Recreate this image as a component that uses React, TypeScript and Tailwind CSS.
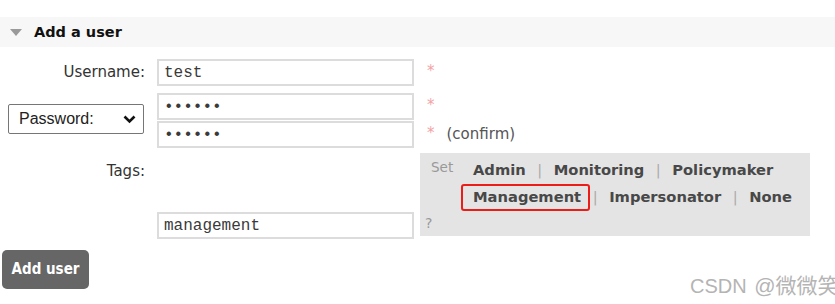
import React from "react";

const inputCls =
  "w-[257px] h-[27px] border-2 border-[#dcdcdc] bg-white px-[5px] text-[16px] text-[#3a3a3a] font-['Liberation_Mono',monospace] outline-none";

function Star() {
  return (
    <span className="self-start mt-[3px] ml-[13px] text-[15px] leading-[18px] text-[#f4a3a3]">*</span>
  );
}

function Sep() {
  return <span className="w-[28px] text-center font-normal text-[#aaa]">|</span>;
}

export default function App() {
  return (
    <div className="relative w-[835px] h-[304px] overflow-hidden bg-white font-['DejaVu_Sans',sans-serif] pt-[17px]">
      {/* Header */}
      <div className="h-[30px] bg-[#f7f7f7] flex items-center pl-[10px]">
        <svg width="12" height="7" viewBox="0 0 12 7" className="mt-[1px]">
          <polygon points="0,0 12,0 6,7" fill="#9a9a9a" />
        </svg>
        <h2 className="ml-[12px] mt-[1px] text-[14.5px] font-bold text-[#111]">Add a user</h2>
      </div>

      {/* Username */}
      <div className="mt-[12px] flex items-center">
        <label className="w-[145px] text-right text-[15px] text-[#333]">Username:</label>
        <input className={"ml-[12px] " + inputCls} defaultValue="test" readOnly />
        <Star />
      </div>

      {/* Password */}
      <div className="mt-[7px] flex items-center">
        <div className="w-[145px] pl-[8px] -mt-[3px]">
          <div className="w-[136px] h-[30px] border border-[#767676] rounded-[2px] bg-white flex items-center justify-between pl-[10px] pr-[7px] font-['Liberation_Sans',sans-serif] text-[16px] text-[#222]">
            <span>Password:</span>
            <svg width="13" height="9" viewBox="0 0 13 9">
              <polyline points="1.5,1.5 6.5,6.5 11.5,1.5" fill="none" stroke="#111" strokeWidth="2.6" />
            </svg>
          </div>
        </div>
        <div className="ml-[12px] flex flex-col gap-[1px]">
          <div className="flex items-center">
            <input type="password" className={inputCls} defaultValue="secret" readOnly />
            <Star />
          </div>
          <div className="flex items-center">
            <input type="password" className={inputCls} defaultValue="secret" readOnly />
            <Star />
            <span className="ml-[12px] text-[15px] text-[#555]">(confirm)</span>
          </div>
        </div>
      </div>

      {/* Tags */}
      <div className="mt-[5px] flex items-start">
        <label className="w-[145px] mt-[9px] text-right text-[15px] leading-[18px] text-[#333]">Tags:</label>
        <div className="ml-[12px] h-[86px] flex flex-col justify-end">
          <input className={inputCls} defaultValue="management" readOnly />
        </div>
        <div className="ml-[6px] w-[390px] h-[83px] bg-[#e4e4e4] pl-[5px] pt-[3px]">
          <div className="flex">
            <span className="w-[48px] pl-[6px] -mt-[2px] text-[13.5px] leading-[27px] text-[#999]">Set</span>
            <div className="flex flex-col text-[14.7px] leading-[27px] font-bold text-[#484848]">
              <div className="flex">
                <span>Admin</span>
                <Sep />
                <span>Monitoring</span>
                <Sep />
                <span>Policymaker</span>
              </div>
              <div className="flex">
                <span className="relative">
                  Management
                  <span className="absolute -left-[12px] -right-[9px] top-[1px] -bottom-[1px] border-2 border-[#ec1c18] rounded-[3px]" />
                </span>
                <Sep />
                <span>Impersonator</span>
                <Sep />
                <span>None</span>
              </div>
            </div>
          </div>
          <div className="mt-[4px] text-[14px] leading-[18px] text-[#999]">?</div>
        </div>
      </div>

      {/* Button */}
      <button className="mt-[11px] ml-[2px] w-[87px] h-[39px] rounded-[5px] bg-[#666] text-white text-[15px] font-bold font-['DejaVu_Sans_Condensed',Roboto,sans-serif]">
        Add user
      </button>

      {/* Watermark */}
      <div className="absolute left-[690px] top-[274px] whitespace-nowrap text-[20px] leading-[24px] text-[#b4b4b4] font-['Liberation_Sans','Noto_Sans_CJK_SC',sans-serif]">
        CSDN <span className="ml-[2px] text-[21px]">@微微笑</span>
      </div>
    </div>
  );
}
